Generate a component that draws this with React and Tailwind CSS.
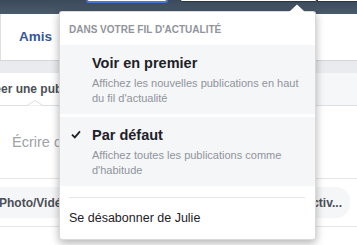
const font = { fontFamily: '"Liberation Sans", Arial, sans-serif' };

function Check() {
  return (
    <svg width="10" height="9" viewBox="0 0 10 9" className="mt-[4px] shrink-0">
      <path d="M1 4.6 L3.8 7.4 L9 1.4" fill="none" stroke="#1d2129" strokeWidth="1.8" />
    </svg>
  );
}

function Option({ title, lines, checked }) {
  return (
    <div className="flex gap-[11px] bg-[#f5f6f7] pl-[11px] pr-3 pt-[9px] pb-[8px]">
      <div className="w-[10px]">{checked && <Check />}</div>
      <div>
        <p className="text-[14.5px] font-bold leading-[18px] text-[#1d2129]">{title}</p>
        <div className="mt-[4px] text-[11px] leading-[15px] text-[#90949c]">
          {lines.map((l) => (
            <p key={l}>{l}</p>
          ))}
        </div>
      </div>
    </div>
  );
}

export default function App() {
  return (
    <div className="relative h-[245px] w-[357px] overflow-hidden bg-white" style={font}>
      {/* cover photo strip */}
      <div className="relative h-[14px] bg-gradient-to-b from-[#3a4a5c] to-[#4b5b6b]">
        <div className="absolute left-[86px] top-[-4px] h-[7px] w-[82px] rounded-[3px] border-2 border-[#4a76d8] bg-white" />
        <div className="absolute left-[180px] top-[-4px] h-[6px] w-[137px] rounded-[2px] border border-[#2b3644] bg-white" />
        <div className="absolute left-[317px] top-[-4px] h-[6px] w-[50px] border border-[#2b3644] bg-white" />
      </div>

      <div className="flex h-[46px] items-center border-l border-[#dddfe2] pl-[18px]">
        <span className="text-[13.5px] font-bold text-[#365899]">Amis</span>
        <span className="ml-[6px] text-[13px] text-[#90949c]">1</span>
      </div>
      <div className="h-[13px] border-t border-[#d3d6db] bg-[#e9ebee]" />

      <div className="flex h-[32px] bg-[#f6f7f9]">
        <div className="relative flex w-[250px] items-center bg-white">
          <span className="-ml-[19px] text-[12px] font-bold text-[#4b4f56]">Créer une publication</span>
          <svg width="16" height="6" viewBox="0 0 16 6" className="absolute bottom-[-1px] left-[27px]">
            <path d="M0 5.5 L8 0.5 L16 5.5" fill="#fff" stroke="#dddfe2" />
          </svg>
        </div>
      </div>
      <div className="h-[73px] border-t border-[#dddfe2] pl-[12px] pt-[24px]">
        <span className="text-[14.5px] text-[#a0a3a8]">Écrire quelque chose...</span>
      </div>
      <div className="flex h-[49px] items-center justify-between border-y border-[#e5e5e5]">
        <div className="flex h-[31px] w-[120px] items-center rounded-r-[14px] bg-[#f5f6f7]">
          <span className="-ml-[1px] text-[12px] font-bold text-[#4b4f56]">Photo/Vidéo</span>
        </div>
        <div className="mr-[7px] flex h-[31px] w-[80px] items-center justify-end rounded-[14px] bg-[#f5f6f7] pr-[8px]">
          <span className="text-[12px] font-bold text-[#4b4f56]">Activ...</span>
        </div>
      </div>
      <div className="flex justify-end pr-[1px] pt-[14px]">
        <span className="text-[10px] leading-none tracking-[1px] text-[#bec2c9]">···</span>
      </div>

      {/* dropdown menu */}
      <div className="absolute left-[59px] top-[11px] w-[257px] rounded-[3px] border border-black/15 bg-white shadow-[0_3px_8px_rgba(0,0,0,0.3)]">
        <svg width="16" height="8" viewBox="0 0 16 8" className="absolute right-[10px] top-[-8px]">
          <path d="M0 8 L8 0.5 L16 8 Z" fill="#fff" />
        </svg>
        <div className="h-[33px] pl-[9px] pt-[12px]">
          <p className="text-[10px] font-bold leading-[12px] text-[#90949c]">DANS VOTRE FIL D'ACTUALITÉ</p>
        </div>
        <Option title="Voir en premier" lines={["Affichez les nouvelles publications en haut", "du fil d'actualité"]} />
        <div className="h-[3px]" />
        <Option checked title="Par défaut" lines={["Affichez toutes les publications comme", "d'habitude"]} />
        <div className="px-[9px] pt-[11px]">
          <div className="mr-[1px] border-t border-[#e5e5e5]" />
          <p className="py-[13px] text-[12.5px] leading-[15px] text-[#1d2129]">Se désabonner de Julie</p>
        </div>
      </div>
    </div>
  );
}
